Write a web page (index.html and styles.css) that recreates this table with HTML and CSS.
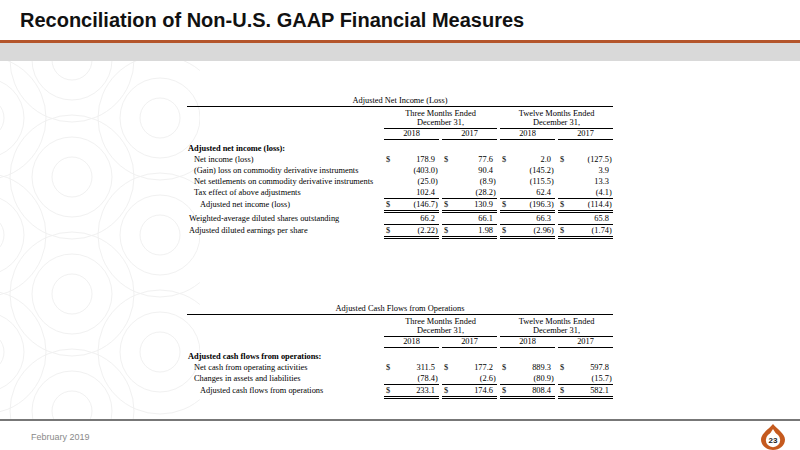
FILE: index.html
```html
<!DOCTYPE html>
<html lang="en">
<head>
<meta charset="utf-8">
<title>Reconciliation of Non-U.S. GAAP Financial Measures</title>
<link rel="stylesheet" href="styles.css">
</head>
<body>
<div class="slide">
  <div class="watermark" aria-hidden="true">
    <svg width="200" height="358" viewBox="0 61 200 358">
      <g fill="none" stroke="#f1f1f1" stroke-width="1">
        <g transform="translate(72 60)"><circle r="20"/><circle r="40"/><circle r="62"/></g>
        <g transform="translate(72 177)"><circle r="20"/><circle r="40"/><circle r="62"/></g>
        <g transform="translate(72 294)"><circle r="20"/><circle r="40"/><circle r="62"/></g>
        <g transform="translate(72 411)"><circle r="20"/><circle r="40"/><circle r="62"/></g>
        <g transform="translate(-16 118)"><circle r="20"/><circle r="40"/><circle r="62"/></g>
        <g transform="translate(-16 235)"><circle r="20"/><circle r="40"/><circle r="62"/></g>
        <g transform="translate(-16 352)"><circle r="20"/><circle r="40"/><circle r="62"/></g>
        <g transform="translate(160 118)"><circle r="20"/><circle r="40"/><circle r="62"/></g>
        <g transform="translate(160 235)"><circle r="20"/><circle r="40"/><circle r="62"/></g>
        <g transform="translate(160 352)"><circle r="20"/><circle r="40"/><circle r="62"/></g>
      </g>
    </svg>
  </div>

  <header class="head"><h1>Reconciliation of Non-U.S. GAAP Financial Measures</h1></header>
  <div class="rule"></div>
  <div class="band"></div>

  <main class="content">
    <section class="fin">
      <div class="cap">Adjusted Net Income (Loss)</div>
      <div></div>
      <div class="hd">Three Months Ended<br>December 31,</div>
      <div class="hd">Twelve Months Ended<br>December 31,</div>
      <div></div>
      <div class="yr">2018</div><div class="yr">2017</div><div class="yr">2018</div><div class="yr">2017</div>

      <div class="sec">Adjusted net income (loss):</div>

      <div class="lb l1">Net income (loss)</div>
      <div class="n"><span class="d">$</span><span class="v">178.9</span></div>
      <div class="n"><span class="d">$</span><span class="v">77.6</span></div>
      <div class="n"><span class="d">$</span><span class="v">2.0</span></div>
      <div class="n"><span class="d">$</span><span class="v neg">(127.5)</span></div>

      <div class="lb l1">(Gain) loss on commodity derivative instruments</div>
      <div class="n"><span class="v neg">(403.0)</span></div>
      <div class="n"><span class="v">90.4</span></div>
      <div class="n"><span class="v neg">(145.2)</span></div>
      <div class="n"><span class="v">3.9</span></div>

      <div class="lb l1">Net settlements on commodity derivative instruments</div>
      <div class="n"><span class="v neg">(25.0)</span></div>
      <div class="n"><span class="v neg">(8.9)</span></div>
      <div class="n"><span class="v neg">(115.5)</span></div>
      <div class="n"><span class="v">13.3</span></div>

      <div class="lb l1">Tax effect of above adjustments</div>
      <div class="n u"><span class="v">102.4</span></div>
      <div class="n u"><span class="v neg">(28.2)</span></div>
      <div class="n u"><span class="v">62.4</span></div>
      <div class="n u"><span class="v neg">(4.1)</span></div>

      <div class="lb l2">Adjusted net income (loss)</div>
      <div class="n uu"><span class="d">$</span><span class="v neg">(146.7)</span></div>
      <div class="n uu"><span class="d">$</span><span class="v">130.9</span></div>
      <div class="n uu"><span class="d">$</span><span class="v neg">(196.3)</span></div>
      <div class="n uu"><span class="d">$</span><span class="v neg">(114.4)</span></div>

      <div class="lb l0">Weighted-average diluted shares outstanding</div>
      <div class="n u"><span class="v">66.2</span></div>
      <div class="n u"><span class="v">66.1</span></div>
      <div class="n u"><span class="v">66.3</span></div>
      <div class="n u"><span class="v">65.8</span></div>

      <div class="lb l0">Adjusted diluted earnings per share</div>
      <div class="n uu"><span class="d">$</span><span class="v neg">(2.22)</span></div>
      <div class="n uu"><span class="d">$</span><span class="v">1.98</span></div>
      <div class="n uu"><span class="d">$</span><span class="v neg">(2.96)</span></div>
      <div class="n uu"><span class="d">$</span><span class="v neg">(1.74)</span></div>
    </section>

    <section class="fin">
      <div class="cap">Adjusted Cash Flows from Operations</div>
      <div></div>
      <div class="hd">Three Months Ended<br>December 31,</div>
      <div class="hd">Twelve Months Ended<br>December 31,</div>
      <div></div>
      <div class="yr">2018</div><div class="yr">2017</div><div class="yr">2018</div><div class="yr">2017</div>

      <div class="sec">Adjusted cash flows from operations:</div>

      <div class="lb l1">Net cash from operating activities</div>
      <div class="n"><span class="d">$</span><span class="v">311.5</span></div>
      <div class="n"><span class="d">$</span><span class="v">177.2</span></div>
      <div class="n"><span class="d">$</span><span class="v">889.3</span></div>
      <div class="n"><span class="d">$</span><span class="v">597.8</span></div>

      <div class="lb l1">Changes in assets and liabilities</div>
      <div class="n u"><span class="v neg">(78.4)</span></div>
      <div class="n u"><span class="v neg">(2.6)</span></div>
      <div class="n u"><span class="v neg">(80.9)</span></div>
      <div class="n u"><span class="v neg">(15.7)</span></div>

      <div class="lb l2">Adjusted cash flows from operations</div>
      <div class="n uu"><span class="d">$</span><span class="v">233.1</span></div>
      <div class="n uu"><span class="d">$</span><span class="v">174.6</span></div>
      <div class="n uu"><span class="d">$</span><span class="v">808.4</span></div>
      <div class="n uu"><span class="d">$</span><span class="v">582.1</span></div>
    </section>
  </main>

  <footer class="foot">
    <span class="date">February 2019</span>
    <svg class="pg" width="24" height="26" viewBox="0 0 24 26" aria-label="Page 23">
      <path d="M12 0 C15.5 4.5 24 9.5 24 15.5 C24 21.5 18.6 26 12 26 C5.4 26 0 21.5 0 15.5 C0 9.5 8.5 4.5 12 0 Z" fill="#c55a1e"/>
      <polygon points="12,5 7.2,12.5 16.8,12.5" fill="#fff"/>
      <circle cx="12" cy="16" r="7.2" fill="#fff"/>
      <text x="12" y="19" text-anchor="middle" class="pgnum">23</text>
    </svg>
  </footer>
</div>
</body>
</html>
```

FILE: styles.css
```css
* { box-sizing: border-box; }
html, body { margin: 0; padding: 0; }
body {
  width: 800px;
  height: 450px;
  overflow: hidden;
  background: #fff;
  font-family: "Liberation Sans", Arial, sans-serif;
}
.slide {
  position: relative;
  width: 800px;
  height: 450px;
  display: flex;
  flex-direction: column;
}
.watermark {
  position: absolute;
  left: 0;
  top: 61px;
  width: 200px;
  height: 358px;
  overflow: hidden;
  z-index: 0;
}
.watermark svg { display: block; }

.head {
  height: 40px;
  padding: 9px 0 0 20px;
}
.head h1 {
  margin: 0;
  font-size: 20px;
  line-height: 23px;
  font-weight: bold;
  color: #111;
}
.rule { height: 3px; background: #b4552b; }
.band { height: 18px; background: #d9d9d9; }

.content {
  flex: 1;
  position: relative;
  z-index: 1;
  padding-top: 33.5px;
}

.fin {
  display: grid;
  grid-template-columns: 194px repeat(4, 55px);
  column-gap: 3px;
  width: 426px;
  margin-left: 187px;
  font-family: "Liberation Serif", "Times New Roman", serif;
  font-size: 8.4px;
  color: #000;
}
.fin + .fin { margin-top: 64px; }

.cap {
  grid-column: 1 / -1;
  text-align: center;
  line-height: 11px;
  border-bottom: 1px solid #000;
}
.hd {
  grid-column: span 2;
  text-align: center;
  padding-top: 2px;
  line-height: 9.5px;
  border-bottom: 1px solid #000;
}
.yr {
  text-align: center;
  line-height: 10px;
  border-bottom: 1px solid #000;
}
.sec {
  grid-column: 1 / -1;
  padding: 3px 0 0 1px;
  line-height: 11px;
  font-weight: bold;
}
.lb { line-height: 11px; white-space: nowrap; }
.l0 { padding-left: 2px; }
.l1 { padding-left: 7px; }
.l2 { padding-left: 13px; }

.n {
  display: flex;
  align-items: flex-start;
  line-height: 11px;
  padding: 0 4px 0 2px;
}
.n .v { margin-left: auto; }
.n .neg { margin-right: -2.8px; }
.u { border-bottom: 1px solid #000; }
.uu { border-bottom: 3px double #000; }

.foot {
  height: 31px;
  border-top: 2px solid #777;
  display: flex;
  align-items: center;
  justify-content: space-between;
  padding: 0 15px 0 31px;
}
.date {
  font-size: 9px;
  color: #8a8a8a;
  margin-top: 2px;
}
.pg { display: block; margin-top: 2px; }
.pgnum {
  font-family: "Liberation Sans", Arial, sans-serif;
  font-size: 8px;
  font-weight: bold;
  fill: #222;
}
```
